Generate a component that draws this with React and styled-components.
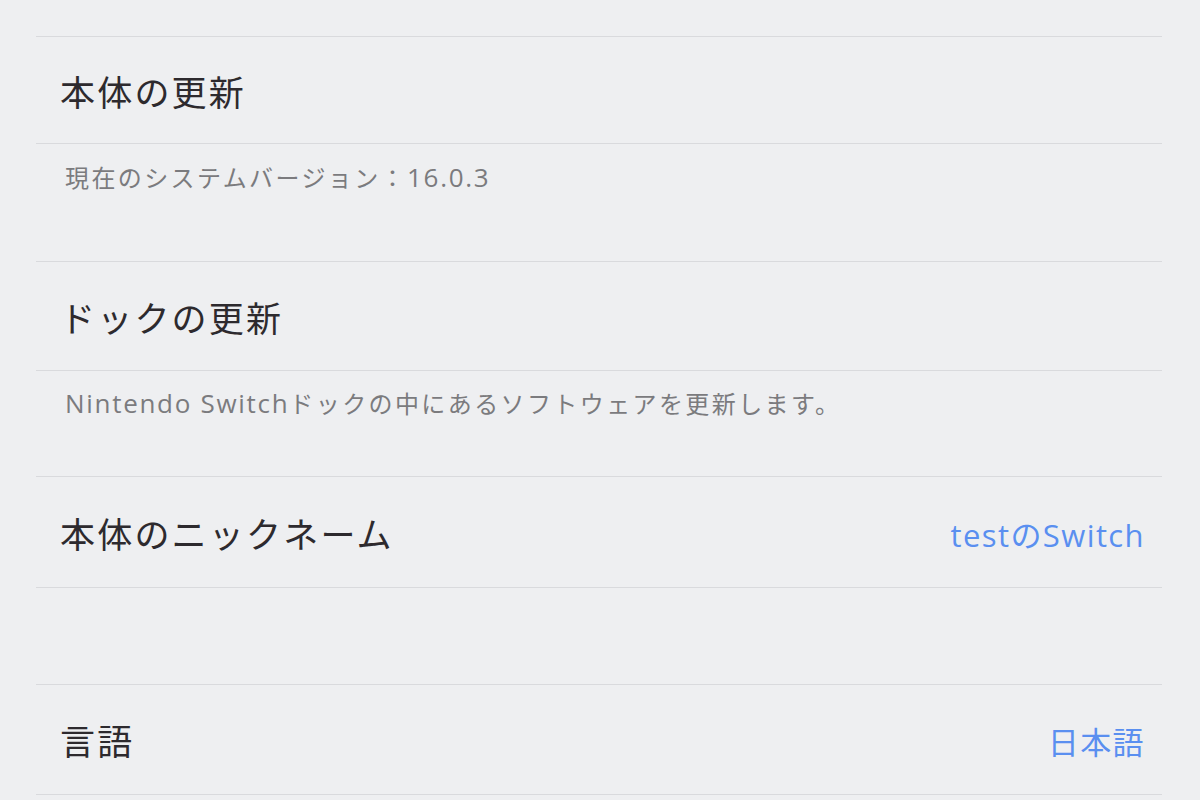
import React from "react";
import styled, { createGlobalStyle } from "styled-components";

const Global = createGlobalStyle`
  html, body {
    margin: 0;
    padding: 0;
    background: #eeeff1;
  }
  #root {
    width: 1200px;
    height: 800px;
    overflow: hidden;
  }
`;

const Screen = styled.div`
  width: 1200px;
  height: 800px;
  background: #eeeff1;
  padding: 36px 38px 0 36px;
  box-sizing: border-box;
  font-family: "Open Sans", "Noto Sans CJK JP", sans-serif;
`;

const List = styled.div`
  display: flex;
  flex-direction: column;
  border-top: 1px solid #d9dadd;
`;

const Row = styled.div`
  display: flex;
  align-items: ${(p) => (p.$top ? "flex-start" : "center")};
  justify-content: space-between;
  height: ${(p) => p.$h}px;
  box-sizing: border-box;
  border-bottom: 1px solid #d9dadd;
  padding: ${(p) => (p.$top ? `${p.$pt}px 18px 0 29px` : "5px 17px 0 24px")};
`;

const Title = styled.div`
  font-size: 35px;
  line-height: 44px;
  color: #2d2a2e;
  letter-spacing: 2.2px;
`;

const Desc = styled.div`
  font-size: 24px;
  line-height: 32px;
  color: #7b7b7e;
  letter-spacing: 2.4px;
`;

const Latin = styled.span`
  font-size: 26px;
  letter-spacing: 1.7px;
`;

const Value = styled.div`
  font-size: 31px;
  line-height: 40px;
  color: #5a8ff0;
  letter-spacing: 1.4px;
`;

export default function App() {
  return (
    <>
      <Global />
      <Screen>
        <List>
          <Row $h={107}>
            <Title>本体の更新</Title>
          </Row>
          <Row $h={118} $top $pt={17}>
            <Desc>
              現在のシステムバージョン：<Latin>16.0.3</Latin>
            </Desc>
          </Row>
          <Row $h={109}>
            <Title>ドックの更新</Title>
          </Row>
          <Row $h={106} $top $pt={16}>
            <Desc>
              <Latin>Nintendo Switch</Latin>ドックの中にあるソフトウェアを更新します。
            </Desc>
          </Row>
          <Row $h={111}>
            <Title>本体のニックネーム</Title>
            <Value>testのSwitch</Value>
          </Row>
          <Row $h={97} />
          <Row $h={110}>
            <Title>言語</Title>
            <Value>日本語</Value>
          </Row>
        </List>
      </Screen>
    </>
  );
}
